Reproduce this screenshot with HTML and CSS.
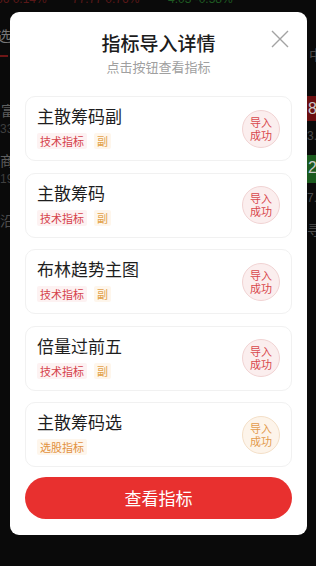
FILE: index.html
```html
<!DOCTYPE html>
<html lang="zh-CN">
<head>
<meta charset="utf-8">
<title>指标导入详情</title>
<link rel="stylesheet" href="styles.css">
</head>
<body>
<div class="page">
  <div class="topline">
    <span class="tl red">36 0.14%</span>
    <span class="tl red">77.77 0.76%</span>
    <span class="tl green">4.03 -0.58%</span>
  </div>
  <div class="side left">
    <div class="s-item s-xuan">选</div>
    <div class="s-bar"></div>
    <div class="s-item s-fu">富</div>
    <div class="s-num">33</div>
    <div class="s-item s-shang">商</div>
    <div class="s-num">19</div>
    <div class="s-item s-yan">沿</div>
  </div>
  <div class="side right">
    <div class="s-item r-zhong">中</div>
    <div class="r-block red-bg">8</div>
    <div class="s-num r-num">3.</div>
    <div class="r-block green-bg">2</div>
    <div class="s-num r-num">7.</div>
    <div class="s-item r-xun">寻</div>
  </div>
</div>

<div class="modal">
  <button class="close" aria-label="关闭">
    <svg width="18" height="18" viewBox="0 0 18 18"><path d="M1 1L17 17M17 1L1 17" stroke="#a3a3a3" stroke-width="1.4" fill="none"/></svg>
  </button>
  <div class="head">
    <div class="title">指标导入详情</div>
    <div class="sub">点击按钮查看指标</div>
  </div>
  <div class="list">
    <div class="card">
      <div class="info">
        <div class="name">主散筹码副</div>
        <div class="tags"><span class="tag tag-red">技术指标</span><span class="tag tag-orange">副</span></div>
      </div>
      <div class="badge badge-red"><span class="bl">导入</span><span class="bl">成功</span></div>
    </div>
    <div class="card">
      <div class="info">
        <div class="name">主散筹码</div>
        <div class="tags"><span class="tag tag-red">技术指标</span><span class="tag tag-orange">副</span></div>
      </div>
      <div class="badge badge-red"><span class="bl">导入</span><span class="bl">成功</span></div>
    </div>
    <div class="card">
      <div class="info">
        <div class="name">布林趋势主图</div>
        <div class="tags"><span class="tag tag-red">技术指标</span><span class="tag tag-orange">副</span></div>
      </div>
      <div class="badge badge-red"><span class="bl">导入</span><span class="bl">成功</span></div>
    </div>
    <div class="card">
      <div class="info">
        <div class="name">倍量过前五</div>
        <div class="tags"><span class="tag tag-red">技术指标</span><span class="tag tag-orange">副</span></div>
      </div>
      <div class="badge badge-red"><span class="bl">导入</span><span class="bl">成功</span></div>
    </div>
    <div class="card">
      <div class="info">
        <div class="name">主散筹码选</div>
        <div class="tags"><span class="tag tag-orange2">选股指标</span></div>
      </div>
      <div class="badge badge-orange"><span class="bl">导入</span><span class="bl">成功</span></div>
    </div>
  </div>
  <button class="view">查看指标</button>
</div>
</body>
</html>
```

FILE: styles.css
```css
* { box-sizing: border-box; }
html, body {
  margin: 0;
  padding: 0;
  width: 316px;
  height: 566px;
  overflow: hidden;
  background: #0a0a0a;
  font-family: "Noto Sans CJK SC", "Noto Sans", sans-serif;
}
.page {
  position: relative;
  width: 316px;
  height: 566px;
  overflow: hidden;
}
.topline {
  display: flex;
  height: 8px;
  overflow: hidden;
  font-size: 12px;
  line-height: 8px;
  font-family: "Liberation Sans", sans-serif;
}
.tl { display: block; margin-top: -5px; }
.tl.red { color: #5a1818; }
.topline .tl:nth-child(1) { margin-left: -4px; width: 76px; }
.topline .tl:nth-child(2) { width: 96px; }
.topline .tl:nth-child(3) { color: #1f5a22; }
.side {
  position: absolute;
  top: 0;
  width: 10px;
  overflow: hidden;
  color: #6b6b6b;
}
.side.left { left: 0; }
.side.right { right: 0; width: 9px; }
.s-item { font-size: 14px; line-height: 16px; white-space: nowrap; }
.s-num { font-size: 12px; line-height: 14px; color: #3f3f3f; font-family: "Liberation Sans", sans-serif; }
.s-xuan { margin-top: 27px; margin-left: -3px; color: #777; }
.s-bar { width: 8px; height: 2px; background: #6e1616; margin-top: 12px; }
.s-fu { margin-top: 45px; margin-left: 1px; color: #5e5e5e; }
.left .s-num { margin-top: 4px; }
.s-shang { margin-top: 16px; color: #5e5e5e; }
.s-yan { margin-top: 26px; color: #4e4e4e; }
.r-zhong { margin-top: 46px; color: #4a4a4a; margin-left: 2px; }
.r-block {
  margin-top: 34px;
  height: 25px;
  font-size: 16px;
  line-height: 25px;
  color: #c9c9c9;
  padding-left: 1px;
  font-family: "Liberation Sans", sans-serif;
}
.red-bg { background: #6b0f10; }
.green-bg { background: #1b5a1e; margin-top: 12px; height: 28px; }
.r-num { margin-top: 8px; color: #4a4a4a; }
.r-xun { margin-top: 16px; color: #4e4e4e; }

.modal {
  position: absolute;
  left: 10px;
  top: 12px;
  width: 297px;
  height: 523px;
  background: #fff;
  border-radius: 9px;
  padding: 18px 15px 16px;
  display: flex;
  flex-direction: column;
}
.close {
  position: absolute;
  right: 18px;
  top: 18px;
  width: 18px;
  height: 18px;
  padding: 0;
  border: 0;
  background: none;
  display: block;
}
.close svg { display: block; }
.head {
  display: flex;
  flex-direction: column;
  align-items: center;
  gap: 2px;
}
.title {
  font-size: 19px;
  line-height: 26px;
  font-weight: 500;
  color: #1c1c1c;
}
.sub {
  font-size: 13px;
  line-height: 18px;
  color: #a0a0a0;
}
.list {
  margin-top: 20px;
  display: flex;
  flex-direction: column;
  gap: 11.5px;
}
.card {
  height: 65px;
  border: 1px solid #f1f1f1;
  border-radius: 10px;
  padding: 0 11px 0 11px;
  display: flex;
  align-items: center;
  justify-content: space-between;
}
.info {
  align-self: flex-start;
  padding-top: 7px;
  display: flex;
  flex-direction: column;
  gap: 5px;
}
.name {
  font-size: 17px;
  line-height: 24px;
  color: #1e1e1e;
}
.tags {
  display: flex;
  gap: 7px;
}
.tag {
  font-size: 11px;
  line-height: 16px;
  height: 16px;
  padding: 0 3px;
  border-radius: 2px;
}
.tag-red { color: #d5414a; background: #fdf2f2; }
.tag-orange { color: #e2a24a; background: #fef6ec; }
.tag-orange2 { color: #e2913e; background: #fef6ec; }
.badge {
  width: 38px;
  height: 38px;
  border-radius: 50%;
  display: flex;
  flex-direction: column;
  align-items: center;
  justify-content: center;
  font-size: 11px;
  line-height: 13px;
}
.bl { display: block; height: 13px; overflow: visible; }
.badge-red { color: #d8474c; background: #fbeeee; border: 1px solid #f1d3d3; }
.badge-orange { color: #e39a4c; background: #fdf4ea; border: 1px solid #f4dfc7; }
.view {
  margin-top: 10px;
  height: 42px;
  border: 0;
  border-radius: 21px;
  background: #e8302f;
  color: #fff;
  font-family: "Noto Sans CJK SC", "Noto Sans", sans-serif;
  font-size: 17px;
  line-height: 42px;
  padding: 0;
  width: 100%;
}
```
